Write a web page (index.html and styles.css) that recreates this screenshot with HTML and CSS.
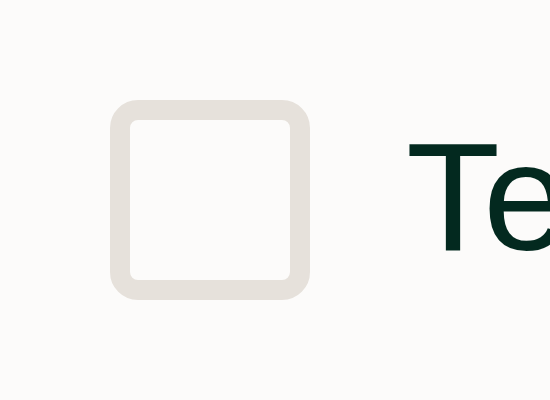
FILE: index.html
```html
<!DOCTYPE html>
<html>
<head>
<meta charset="utf-8">
<link rel="stylesheet" href="styles.css">
</head>
<body>
<label class="option">
  <span class="checkbox"></span>
  <span class="label-text">Text</span>
</label>
</body>
</html>
```

FILE: styles.css
```css
html, body {
  margin: 0;
  padding: 0;
  background: #fcfbfa;
  overflow: hidden;
}
body {
  width: 550px;
  height: 400px;
}
.option {
  display: flex;
  align-items: flex-start;
  gap: 96px;
  padding: 100px 0 0 110px;
  white-space: nowrap;
}
.checkbox {
  flex: none;
  box-sizing: border-box;
  width: 200px;
  height: 200px;
  border: 20px solid #e6e1db;
  border-radius: 28px;
  background: #fcfbfa;
}
.label-text {
  margin-top: 20px;
  font-family: "Liberation Sans", Arial, sans-serif;
  font-size: 154px;
  line-height: 154px;
  color: #03291f;
}
```
